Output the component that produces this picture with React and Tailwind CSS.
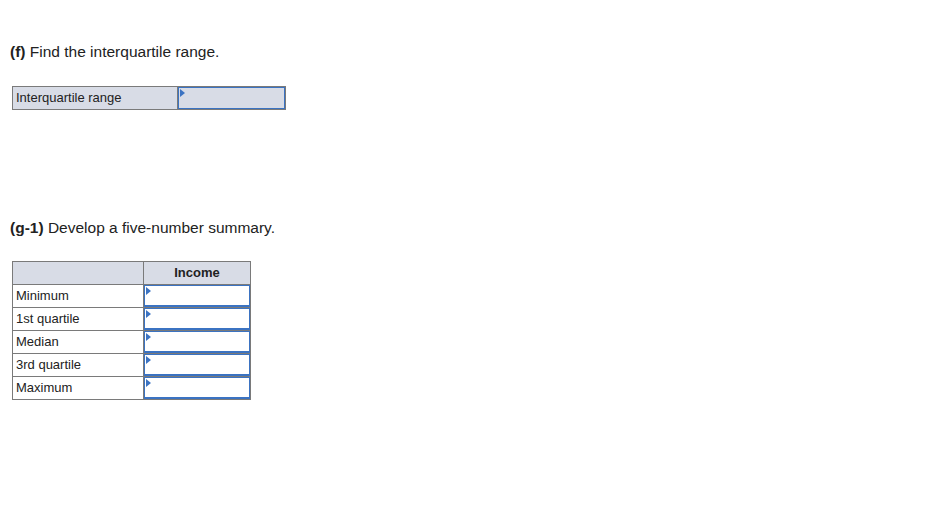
import React from "react";

const Marker = () => (
  <span className="absolute left-[1px] top-[1px] w-0 h-0 border-y-[4px] border-y-transparent border-l-[5px] border-l-[#3b73c2]" />
);

const InputCell = ({ grey }) => (
  <td className="border border-[#7a7a7a] p-0">
    <div className={`relative h-[22px] border border-[#3b73c2] border-b-2 ${grey ? "bg-[#d8dce6]" : "bg-white"}`}>
      <Marker />
    </div>
  </td>
);

const rows = ["Minimum", "1st quartile", "Median", "3rd quartile", "Maximum"];

export default function App() {
  return (
    <div className="w-[935px] h-[509px] bg-white text-[#222] font-['Liberation_Sans',Arial,sans-serif]">
      <div className="pl-[10px] pt-[42px]">
        <p className="text-[15.5px] leading-[20px]">
          <span className="font-bold">(f)</span> Find the interquartile range.
        </p>
        <table className="mt-[24px] ml-[2px] border-collapse text-[13px]">
          <tbody>
            <tr>
              <td className="border border-[#7a7a7a] bg-[#d8dce6] w-[165px] h-[23px] px-[3px] py-0 align-middle">
                Interquartile range
              </td>
              <td className="border border-[#7a7a7a] p-0 w-[108px]">
                <div className="relative h-[22px] border border-[#3b73c2] bg-[#d8dce6]">
                  <Marker />
                </div>
              </td>
            </tr>
          </tbody>
        </table>

        <p className="mt-[108px] text-[15.5px] leading-[20px]">
          <span className="font-bold">(g-1)</span> Develop a five-number summary.
        </p>
        <table className="mt-[23px] ml-[2px] border-collapse text-[13px]">
          <tbody>
            <tr>
              <td className="border border-[#7a7a7a] bg-[#d8dce6] w-[131px] h-[23px] p-0" />
              <td className="border border-[#7a7a7a] bg-[#d8dce6] w-[107px] h-[23px] p-0 text-center font-bold">
                Income
              </td>
            </tr>
            {rows.map((r) => (
              <tr key={r}>
                <td className="border border-[#7a7a7a] h-[23px] px-[3px] py-0 align-middle">{r}</td>
                <InputCell />
              </tr>
            ))}
          </tbody>
        </table>
      </div>
    </div>
  );
}
